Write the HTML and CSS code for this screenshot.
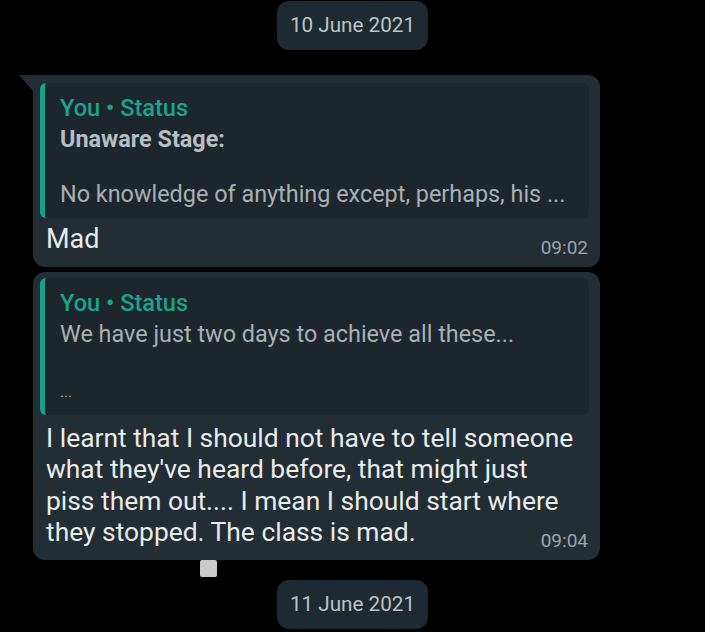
FILE: index.html
```html
<!DOCTYPE html>
<html lang="en">
<head>
  <meta charset="UTF-8">
  <title>Chat</title>
  <link rel="stylesheet" href="styles.css">
</head>
<body>

  <div class="chat">

    <div class="date-pill">10 June 2021</div>

    <div class="bubble first">
      <div class="quote">
        <div class="quote-name">You • Status</div>
        <div class="quote-text"><strong>Unaware Stage:</strong><br><br>No knowledge of anything except, perhaps, his ...</div>
      </div>
      <div class="msg big">Mad</div>
      <span class="time">09:02</span>
    </div>

    <div class="bubble">
      <div class="quote">
        <div class="quote-name">You • Status</div>
        <div class="quote-text">We have just two days to achieve all these...<br><br><span class="dots">...</span></div>
      </div>
      <div class="msg">I learnt that I should not have to tell someone what they've heard before, that might just piss them out.... I mean I should start where they stopped. The class is mad.</div>
      <span class="time">09:04</span>
    </div>

    <div class="marker"></div>

    <div class="date-pill">11 June 2021</div>

  </div>

</body>
</html>
```

FILE: styles.css
```css
* { box-sizing: border-box; margin: 0; padding: 0; }

body {
  background: #000;
  font-family: Roboto, "Noto Sans", sans-serif;
  color: #e4e7e9;
  width: 705px;
  height: 632px;
  overflow: hidden;
}

.chat {
  display: flex;
  flex-direction: column;
  padding-top: 1px;
}

.date-pill {
  align-self: center;
  width: 151px;
  height: 49px;
  border-radius: 12px;
  background: #1e2a31;
  color: #bcc3c7;
  font-size: 20.7px;
  line-height: 49px;
  text-align: center;
}

.bubble {
  position: relative;
  margin-left: 33px;
  width: 567px;
  padding: 8px 11px 12px 7px;
  background: #232d34;
  border-radius: 12px;
}

.bubble.first {
  margin-top: 25px;
  border-top-left-radius: 0;
}

.bubble.first::before {
  content: "";
  position: absolute;
  left: -14px;
  top: 0;
  border-top: 16px solid #232d34;
  border-left: 14px solid transparent;
}

.bubble + .bubble {
  margin-top: 5px;
}

.bubble + .bubble .quote {
  margin-top: -2px;
}

.quote {
  background: #1d262c;
  border-left: 5px solid #17a38b;
  border-radius: 6px;
  padding: 10px 12px 9px 15px;
}

.quote-name {
  color: #1aa38c;
  font-size: 23.6px;
  font-weight: 500;
  line-height: 30px;
  margin-bottom: 3px;
}

.quote-text {
  color: #a9b0b4;
  font-size: 23.4px;
  line-height: 27.5px;
}

.quote-text strong {
  color: #b8bec2;
  font-weight: 700;
}

.dots {
  font-size: 15px;
}

.msg {
  margin-top: 8px;
  padding: 0 8px 0 6px;
  font-size: 26.4px;
  line-height: 31.3px;
  color: #e8ebec;
}

.msg.big {
  margin-top: 6px;
  font-size: 27px;
  line-height: 31px;
}

.time {
  position: absolute;
  right: 12px;
  bottom: 8px;
  color: #9ba4a9;
  font-size: 19px;
}

.marker {
  margin: 0 0 0 200px;
  width: 17px;
  height: 17px;
  background: #c9c9c9;
  border-radius: 2px;
}

.date-pill:last-child {
  margin-top: 3px;
}
```
